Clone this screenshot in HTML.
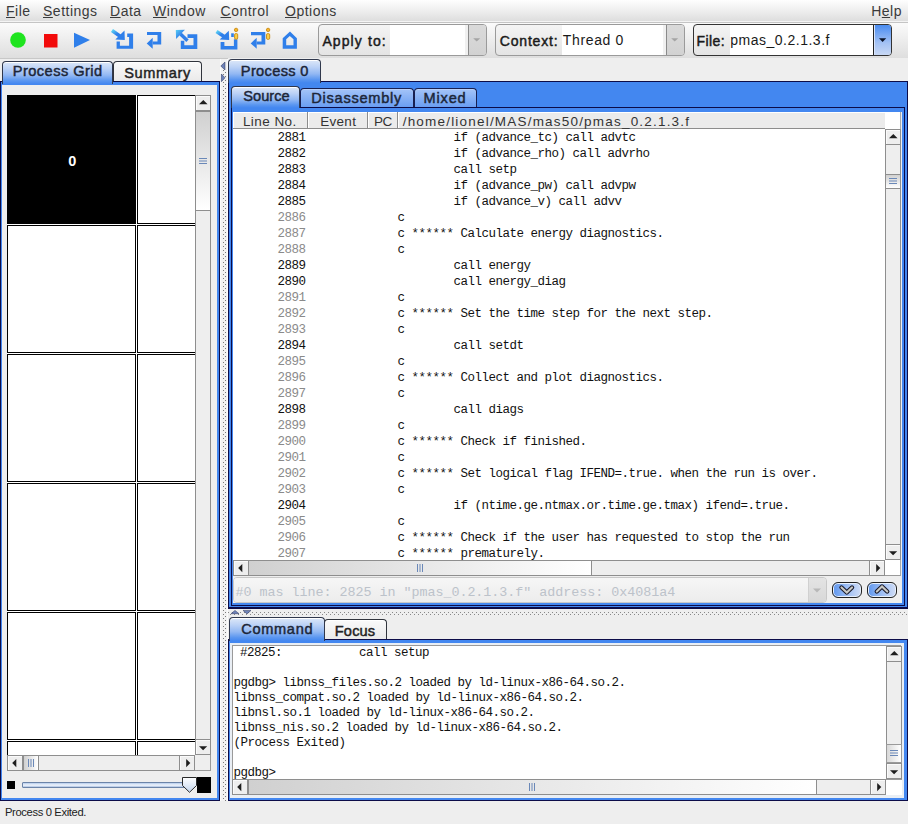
<!DOCTYPE html><html><head><meta charset="utf-8"><style>
html,body{margin:0;padding:0;}
body{width:908px;height:824px;position:relative;overflow:hidden;background:#eeeeee;font-family:"Liberation Sans",sans-serif;}
.a{position:absolute;box-sizing:border-box;}
.t{position:absolute;white-space:pre;}
u{text-decoration:underline;text-decoration-thickness:1px;text-underline-offset:0.5px;}
</style></head><body>
<div class="a" style="left:0px;top:0px;width:908px;height:22px;background:linear-gradient(#fefefe,#ececec 55%,#dcdcdc);box-shadow:inset 0 -1px 0 #f4f4f4;"></div><div class="a" style="left:0px;top:22px;width:908px;height:1px;background:#c4c4c4;"></div><div class="t" style="left:6px;top:3.13px;font-size:14px;line-height:16.1px;font-weight:normal;color:#3a3a3a;letter-spacing:0.5px;font-family:'Liberation Sans', sans-serif;"><u>F</u>ile</div><div class="t" style="left:43px;top:3.13px;font-size:14px;line-height:16.1px;font-weight:normal;color:#3a3a3a;letter-spacing:0.5px;font-family:'Liberation Sans', sans-serif;"><u>S</u>ettings</div><div class="t" style="left:110px;top:3.13px;font-size:14px;line-height:16.1px;font-weight:normal;color:#3a3a3a;letter-spacing:0.5px;font-family:'Liberation Sans', sans-serif;"><u>D</u>ata</div><div class="t" style="left:153px;top:3.13px;font-size:14px;line-height:16.1px;font-weight:normal;color:#3a3a3a;letter-spacing:0.5px;font-family:'Liberation Sans', sans-serif;"><u>W</u>indow</div><div class="t" style="left:220.5px;top:3.13px;font-size:14px;line-height:16.1px;font-weight:normal;color:#3a3a3a;letter-spacing:0.5px;font-family:'Liberation Sans', sans-serif;"><u>C</u>ontrol</div><div class="t" style="left:285px;top:3.13px;font-size:14px;line-height:16.1px;font-weight:normal;color:#3a3a3a;letter-spacing:0.5px;font-family:'Liberation Sans', sans-serif;"><u>O</u>ptions</div><div class="t" style="left:871.2px;top:3.13px;font-size:14px;line-height:16.1px;font-weight:normal;color:#3a3a3a;letter-spacing:0.5px;font-family:'Liberation Sans', sans-serif;">H<u>e</u>lp</div><div class="a" style="left:0px;top:23px;width:908px;height:35px;background:linear-gradient(#fbfbfb,#dedede);"></div><div class="a" style="left:0px;top:58px;width:908px;height:1px;background:#c8c8c8;"></div><svg class="a" style="left:10px;top:32px" width="16" height="16" viewBox="0 0 16 16"><circle cx="8" cy="8" r="7.8" fill="#1fe41f"/></svg><svg class="a" style="left:43px;top:33px" width="15" height="15" viewBox="0 0 15 15"><rect x="1" y="1" width="13.5" height="13.5" fill="#f20a0a"/></svg><svg class="a" style="left:72px;top:31px" width="20" height="18" viewBox="0 0 20 18"><path d="M2 1.8 L18 8.9 L2 16.8 Z" fill="#2f7fea"/></svg><svg class="a" style="left:108px;top:26px" width="30" height="26" viewBox="0 0 30 26"><defs><linearGradient id="g1" x1="0" y1="0" x2="1" y2="1"><stop offset="0" stop-color="#5ad0f4"/><stop offset="0.6" stop-color="#2f7fea"/></linearGradient></defs><path d="M4 4.6 L12.5 10.5" stroke="url(#g1)" stroke-width="3.6" stroke-linecap="butt"/><path d="M7.3 13.5 L16.5 4.6 L16.8 13.9 Z" fill="#2f7fea"/><path fill="#2f7fea" d="M19.2 7.6 H25.1 V22.8 H8.6 V15.5 H11.9 V19.8 H21.1 V10.9 H19.2 Z"/></svg><svg class="a" style="left:142px;top:26px" width="24" height="26" viewBox="0 0 24 26"><path fill="#2f7fea" d="M5 6 H19.2 V18.6 H10.7 V15.5 H15.5 V9.1 H5 Z"/><path d="M4.7 17.4 L10.7 11.7 L10.7 22.7 Z" fill="#2f7fea"/></svg><svg class="a" style="left:172px;top:26px" width="28" height="26" viewBox="0 0 28 26"><defs><linearGradient id="g3" x1="0" y1="0" x2="1" y2="1"><stop offset="0" stop-color="#5ad0f4"/><stop offset="0.6" stop-color="#2f7fea"/></linearGradient></defs><path d="M8.5 8 L15.5 14.8" stroke="#2f7fea" stroke-width="3.4"/><path d="M3.8 4.1 L12.9 3.8 L4.1 12.9 Z" fill="url(#g3)"/><path fill="#2f7fea" d="M15.5 8.2 H25.3 V23 H8.8 V14.8 H12.3 V19.3 H21.5 V12 H15.5 Z"/></svg><svg class="a" style="left:214px;top:26px" width="28" height="26" viewBox="0 0 28 26"><defs><linearGradient id="g4" x1="0" y1="0" x2="1" y2="1"><stop offset="0" stop-color="#5ad0f4"/><stop offset="0.6" stop-color="#2f7fea"/></linearGradient></defs><path d="M2.5 5.6 L10.5 10.8" stroke="url(#g4)" stroke-width="3.6"/><path d="M5.7 13.6 L14.8 4.7 L15.2 13.9 Z" fill="#2f7fea"/><rect x="17.2" y="7.3" width="2.6" height="3.7" fill="#2f7fea"/><path fill="#2f7fea" d="M19.9 13.3 H23.4 V23.4 H6.6 V16.1 H10.4 V19.9 H19.9 Z"/><circle cx="22.1" cy="3.9" r="1.7" fill="#f7b52a" stroke="#c98a10" stroke-width="0.9"/><rect x="20.6" y="7.6" width="3.1" height="5.6" rx="1.2" fill="#f9d04a" stroke="#c98a10" stroke-width="0.9"/></svg><svg class="a" style="left:246px;top:26px" width="28" height="26" viewBox="0 0 28 26"><path fill="#2f7fea" d="M5 6 H19.3 V18.6 H10.7 V15.5 H15.5 V9.2 H5 Z"/><path d="M4.7 17.4 L10.7 11.7 L10.7 22.7 Z" fill="#2f7fea"/><circle cx="22.1" cy="3.9" r="1.7" fill="#f7b52a" stroke="#c98a10" stroke-width="0.9"/><rect x="20.5" y="7.6" width="3.2" height="5.8" rx="1.3" fill="#f9d04a" stroke="#c98a10" stroke-width="0.9"/></svg><svg class="a" style="left:278px;top:26px" width="24" height="26" viewBox="0 0 24 26"><path fill="#2f7fea" fill-rule="evenodd" d="M4.7 22.7 V12.3 L12 5.4 L18.9 12.3 V22.7 Z M8.2 19.2 H15.5 V13.2 L11.8 10.1 L8.2 13.2 Z"/></svg><div class="a" style="left:318px;top:24px;width:169px;height:32px;border:1px solid #9a9a9a;border-radius:4px;background:linear-gradient(#f4f4f4,#e4e4e4);overflow:hidden;"></div><div class="a" style="left:390px;top:25px;width:78px;height:30px;background:#fff;border-right:3px solid #f0f0f0;"></div><div class="a" style="left:468px;top:25px;width:18px;height:30px;background:linear-gradient(#dadada,#d2d2d2);border-left:1px solid #8a8a8a;border-radius:0 3px 3px 0;"></div><svg class="a" style="left:472px;top:37px" width="10" height="6" viewBox="0 0 10 6"><path d="M1.2 1.2 H8.2 L4.7 4.4 Z" fill="#a4a4a4"/></svg><div class="t" style="left:322.4px;top:32.93px;font-size:14px;line-height:16.1px;font-weight:normal;color:#1a1a1a;letter-spacing:1.1px;font-family:'Liberation Sans', sans-serif;-webkit-text-stroke:0.45px #1a1a1a;">Apply to:</div><div class="a" style="left:495px;top:24px;width:190px;height:32px;border:1px solid #9a9a9a;border-radius:4px;background:linear-gradient(#f4f4f4,#e4e4e4);overflow:hidden;"></div><div class="a" style="left:562px;top:25px;width:104px;height:30px;background:#fff;border-right:3px solid #f0f0f0;"></div><div class="a" style="left:666px;top:25px;width:18px;height:30px;background:linear-gradient(#dadada,#d2d2d2);border-left:1px solid #8a8a8a;border-radius:0 3px 3px 0;"></div><svg class="a" style="left:670px;top:37px" width="10" height="6" viewBox="0 0 10 6"><path d="M1.2 1.2 H8.2 L4.7 4.4 Z" fill="#a4a4a4"/></svg><div class="t" style="left:499.8px;top:32.93px;font-size:14px;line-height:16.1px;font-weight:normal;color:#1a1a1a;letter-spacing:0.8px;font-family:'Liberation Sans', sans-serif;-webkit-text-stroke:0.45px #1a1a1a;">Context:</div><div class="t" style="left:562.8px;top:32.13px;font-size:14px;line-height:16.1px;font-weight:normal;color:#1a1a1a;letter-spacing:0.65px;font-family:'Liberation Sans', sans-serif;">Thread 0</div><div class="a" style="left:693px;top:24px;width:199px;height:32px;border:1px solid #333;border-radius:4px;background:linear-gradient(#f4f4f4,#e4e4e4);overflow:hidden;"></div><div class="a" style="left:730px;top:25px;width:143px;height:30px;background:#fff;"></div><div class="a" style="left:873px;top:25px;width:18px;height:30px;background:linear-gradient(#4a8cf0,#a4c2f4 60%,#c8d8f4);border-left:1px solid #222;box-shadow:inset 1px 0 0 #d8e4fa;border-radius:0 3px 3px 0;"></div><svg class="a" style="left:878px;top:37px" width="10" height="7" viewBox="0 0 10 7"><path d="M1 1.2 H8.2 L4.6 5 Z" fill="#0c1428"/></svg><div class="t" style="left:696.5px;top:32.93px;font-size:14px;line-height:16.1px;font-weight:normal;color:#1a1a1a;letter-spacing:0.4px;font-family:'Liberation Sans', sans-serif;-webkit-text-stroke:0.45px #1a1a1a;">File:</div><div class="t" style="left:730.3px;top:32.13px;font-size:14px;line-height:16.1px;font-weight:normal;color:#1a1a1a;letter-spacing:0.5px;font-family:'Liberation Sans', sans-serif;">pmas_0.2.1.3.f</div><div class="a" style="left:0px;top:81px;width:220px;height:720px;background:#0c0c48;"></div><div class="a" style="left:1px;top:82px;width:218px;height:718px;background:#4387f0;"></div><div class="a" style="left:2px;top:85px;width:215px;height:713px;background:#eeeeee;"></div><div class="a" style="left:113px;top:61px;width:89px;height:20px;border:1px solid #30343c;border-bottom:none;border-radius:4px 4px 0 0;box-shadow:inset 0 1px 0 #fff;background:linear-gradient(#fafafa,#eaeaea);"></div><div class="t" style="left:124.2px;top:64.59px;font-size:14.6px;line-height:16.79px;font-weight:normal;color:#222;letter-spacing:0.6px;font-family:'Liberation Sans', sans-serif;-webkit-text-stroke:0.45px #222;">Summary</div><div class="a" style="left:2px;top:61px;width:111px;height:23px;border:1px solid #30384c;border-bottom:none;border-radius:4px 4px 0 0;box-shadow:inset 0 1px 0 #fff;background:linear-gradient(#dde8f8 0%,#bcd2f6 30%,#92b8f3 60%,#5a96f0 85%,#4286f0 100%);"></div><div class="t" style="left:12.8px;top:62.79px;font-size:14.6px;line-height:16.79px;font-weight:normal;color:#1c2638;letter-spacing:0.45px;font-family:'Liberation Sans', sans-serif;-webkit-text-stroke:0.45px #1c2638;">Process Grid</div><div class="a" style="left:7px;top:95px;width:188px;height:660px;background:#ffffff;overflow:hidden;"></div><div class="a" style="left:7px;top:95px;width:129px;height:129px;background:#000;"></div><div class="a" style="left:137px;top:95px;width:60px;height:129px;border:1px solid #000;background:#fff;border-right:none;"></div><div class="a" style="left:7px;top:225px;width:129px;height:128px;border:1px solid #000;background:#fff;"></div><div class="a" style="left:137px;top:225px;width:60px;height:128px;border:1px solid #000;background:#fff;border-right:none;"></div><div class="a" style="left:7px;top:354px;width:129px;height:128px;border:1px solid #000;background:#fff;"></div><div class="a" style="left:137px;top:354px;width:60px;height:128px;border:1px solid #000;background:#fff;border-right:none;"></div><div class="a" style="left:7px;top:483px;width:129px;height:128px;border:1px solid #000;background:#fff;"></div><div class="a" style="left:137px;top:483px;width:60px;height:128px;border:1px solid #000;background:#fff;border-right:none;"></div><div class="a" style="left:7px;top:612px;width:129px;height:128px;border:1px solid #000;background:#fff;"></div><div class="a" style="left:137px;top:612px;width:60px;height:128px;border:1px solid #000;background:#fff;border-right:none;"></div><div class="a" style="left:7px;top:741px;width:129px;height:16px;border:1px solid #000;background:#fff;border-bottom:none;"></div><div class="a" style="left:137px;top:741px;width:60px;height:16px;border:1px solid #000;background:#fff;border-right:none;border-bottom:none;"></div><div class="t" style="left:68.2px;top:152.88px;font-size:14.5px;line-height:16.67px;font-weight:bold;color:#fff;letter-spacing:0px;font-family:'Liberation Sans', sans-serif;">0</div><div class="a" style="left:195px;top:95px;width:16px;height:660px;background:#eeeeee;border-left:1px solid #8e8e8e;border-right:1px solid #8e8e8e;"></div><div class="a" style="left:195px;top:95px;width:16px;height:16px;background:#eeeeee;border:1px solid #8e8e8e;box-shadow:inset 1px 1px 0 #fafafa;"></div><svg class="a" style="left:198.5px;top:100px" width="9" height="5" viewBox="0 0 9 5"><path d="M0 4.3 L4.3 0 L8.6 4.3 Z" fill="#1e1e1e"/></svg><div class="a" style="left:195px;top:739px;width:16px;height:16px;background:#eeeeee;border:1px solid #8e8e8e;box-shadow:inset 1px 1px 0 #fafafa;"></div><svg class="a" style="left:199px;top:745.5px" width="9" height="5" viewBox="0 0 9 5"><path d="M0 0.2 L8.2 0.2 L4.1 4.3 Z" fill="#1e1e1e"/></svg><div class="a" style="left:195px;top:111px;width:16px;height:100px;background:linear-gradient(#d0d0d0,#ffffff);border:1px solid #8e8e8e;"></div><svg class="a" style="left:199px;top:157px" width="8" height="8" viewBox="0 0 8 8"><path d="M0 1.5 H8 M0 4 H8 M0 6.5 H8" stroke="#6a88b8" stroke-width="1"/></svg><div class="a" style="left:7px;top:755px;width:188px;height:16px;background:#eeeeee;border-top:1px solid #8e8e8e;border-bottom:1px solid #8e8e8e;"></div><div class="a" style="left:7px;top:755px;width:16px;height:16px;background:#eeeeee;border:1px solid #8e8e8e;box-shadow:inset 1px 1px 0 #fafafa;"></div><svg class="a" style="left:11.5px;top:759px" width="5" height="9" viewBox="0 0 5 9"><path d="M4.3 0 L0.2 4.1 L4.3 8.2 Z" fill="#1e1e1e"/></svg><div class="a" style="left:179px;top:755px;width:16px;height:16px;background:#eeeeee;border:1px solid #8e8e8e;box-shadow:inset 1px 1px 0 #fafafa;"></div><svg class="a" style="left:186px;top:759px" width="5" height="9" viewBox="0 0 5 9"><path d="M0.2 0 L4.3 4.1 L0.2 8.2 Z" fill="#1e1e1e"/></svg><div class="a" style="left:23px;top:755px;width:16px;height:16px;background:linear-gradient(90deg,#d0d0d0,#ffffff);border:1px solid #8e8e8e;"></div><svg class="a" style="left:27px;top:759px" width="8" height="8" viewBox="0 0 8 8"><path d="M1.5 0 V8 M4 0 V8 M6.5 0 V8" stroke="#6a88b8" stroke-width="1"/></svg><div class="a" style="left:7px;top:781px;width:8px;height:8px;background:#000;"></div><div class="a" style="left:22px;top:782px;width:172px;height:6px;border:1px solid #6c84a8;border-radius:1px;background:linear-gradient(#b4cbec,#f2f6fc 55%,#a9c0e2);"></div><svg class="a" style="left:182px;top:776px" width="16" height="17" viewBox="0 0 16 17"><defs><linearGradient id="sth" x1="0" y1="0" x2="0" y2="1"><stop offset="0" stop-color="#ffffff"/><stop offset="1" stop-color="#c4d6ee"/></linearGradient></defs><path d="M0.5 1.5 H14.5 V9.5 L7.5 16.3 L0.5 9.5 Z" fill="url(#sth)" stroke="#2a2a2a" stroke-width="1"/></svg><div class="a" style="left:195px;top:755px;width:16px;height:16px;background:#eeeeee;border-right:1px solid #9a9a9a;border-bottom:1px solid #9a9a9a;"></div><div class="a" style="left:197px;top:777px;width:14px;height:16px;background:#000;"></div><div class="a" style="left:220px;top:59px;width:8px;height:742px;background:#f2f2f2;border-left:1px solid #fbfbfb;border-right:1px solid #fbfbfb;"></div><svg class="a" style="left:223px;top:70px" width="3" height="731" viewBox="0 0 3 731"><rect x="0" y="0" width="1" height="1" fill="#7a7a7a"/><rect x="0" y="4" width="1" height="1" fill="#7a7a7a"/><rect x="0" y="8" width="1" height="1" fill="#7a7a7a"/><rect x="0" y="12" width="1" height="1" fill="#7a7a7a"/><rect x="0" y="16" width="1" height="1" fill="#7a7a7a"/><rect x="0" y="20" width="1" height="1" fill="#7a7a7a"/><rect x="0" y="24" width="1" height="1" fill="#7a7a7a"/><rect x="0" y="28" width="1" height="1" fill="#7a7a7a"/><rect x="0" y="32" width="1" height="1" fill="#7a7a7a"/><rect x="0" y="36" width="1" height="1" fill="#7a7a7a"/><rect x="0" y="40" width="1" height="1" fill="#7a7a7a"/><rect x="0" y="44" width="1" height="1" fill="#7a7a7a"/><rect x="0" y="48" width="1" height="1" fill="#7a7a7a"/><rect x="0" y="52" width="1" height="1" fill="#7a7a7a"/><rect x="0" y="56" width="1" height="1" fill="#7a7a7a"/><rect x="0" y="60" width="1" height="1" fill="#7a7a7a"/><rect x="0" y="64" width="1" height="1" fill="#7a7a7a"/><rect x="0" y="68" width="1" height="1" fill="#7a7a7a"/><rect x="0" y="72" width="1" height="1" fill="#7a7a7a"/><rect x="0" y="76" width="1" height="1" fill="#7a7a7a"/><rect x="0" y="80" width="1" height="1" fill="#7a7a7a"/><rect x="0" y="84" width="1" height="1" fill="#7a7a7a"/><rect x="0" y="88" width="1" height="1" fill="#7a7a7a"/><rect x="0" y="92" width="1" height="1" fill="#7a7a7a"/><rect x="0" y="96" width="1" height="1" fill="#7a7a7a"/><rect x="0" y="100" width="1" height="1" fill="#7a7a7a"/><rect x="0" y="104" width="1" height="1" fill="#7a7a7a"/><rect x="0" y="108" width="1" height="1" fill="#7a7a7a"/><rect x="0" y="112" width="1" height="1" fill="#7a7a7a"/><rect x="0" y="116" width="1" height="1" fill="#7a7a7a"/><rect x="0" y="120" width="1" height="1" fill="#7a7a7a"/><rect x="0" y="124" width="1" height="1" fill="#7a7a7a"/><rect x="0" y="128" width="1" height="1" fill="#7a7a7a"/><rect x="0" y="132" width="1" height="1" fill="#7a7a7a"/><rect x="0" y="136" width="1" height="1" fill="#7a7a7a"/><rect x="0" y="140" width="1" height="1" fill="#7a7a7a"/><rect x="0" y="144" width="1" height="1" fill="#7a7a7a"/><rect x="0" y="148" width="1" height="1" fill="#7a7a7a"/><rect x="0" y="152" width="1" height="1" fill="#7a7a7a"/><rect x="0" y="156" width="1" height="1" fill="#7a7a7a"/><rect x="0" y="160" width="1" height="1" fill="#7a7a7a"/><rect x="0" y="164" width="1" height="1" fill="#7a7a7a"/><rect x="0" y="168" width="1" height="1" fill="#7a7a7a"/><rect x="0" y="172" width="1" height="1" fill="#7a7a7a"/><rect x="0" y="176" width="1" height="1" fill="#7a7a7a"/><rect x="0" y="180" width="1" height="1" fill="#7a7a7a"/><rect x="0" y="184" width="1" height="1" fill="#7a7a7a"/><rect x="0" y="188" width="1" height="1" fill="#7a7a7a"/><rect x="0" y="192" width="1" height="1" fill="#7a7a7a"/><rect x="0" y="196" width="1" height="1" fill="#7a7a7a"/><rect x="0" y="200" width="1" height="1" fill="#7a7a7a"/><rect x="0" y="204" width="1" height="1" fill="#7a7a7a"/><rect x="0" y="208" width="1" height="1" fill="#7a7a7a"/><rect x="0" y="212" width="1" height="1" fill="#7a7a7a"/><rect x="0" y="216" width="1" height="1" fill="#7a7a7a"/><rect x="0" y="220" width="1" height="1" fill="#7a7a7a"/><rect x="0" y="224" width="1" height="1" fill="#7a7a7a"/><rect x="0" y="228" width="1" height="1" fill="#7a7a7a"/><rect x="0" y="232" width="1" height="1" fill="#7a7a7a"/><rect x="0" y="236" width="1" height="1" fill="#7a7a7a"/><rect x="0" y="240" width="1" height="1" fill="#7a7a7a"/><rect x="0" y="244" width="1" height="1" fill="#7a7a7a"/><rect x="0" y="248" width="1" height="1" fill="#7a7a7a"/><rect x="0" y="252" width="1" height="1" fill="#7a7a7a"/><rect x="0" y="256" width="1" height="1" fill="#7a7a7a"/><rect x="0" y="260" width="1" height="1" fill="#7a7a7a"/><rect x="0" y="264" width="1" height="1" fill="#7a7a7a"/><rect x="0" y="268" width="1" height="1" fill="#7a7a7a"/><rect x="0" y="272" width="1" height="1" fill="#7a7a7a"/><rect x="0" y="276" width="1" height="1" fill="#7a7a7a"/><rect x="0" y="280" width="1" height="1" fill="#7a7a7a"/><rect x="0" y="284" width="1" height="1" fill="#7a7a7a"/><rect x="0" y="288" width="1" height="1" fill="#7a7a7a"/><rect x="0" y="292" width="1" height="1" fill="#7a7a7a"/><rect x="0" y="296" width="1" height="1" fill="#7a7a7a"/><rect x="0" y="300" width="1" height="1" fill="#7a7a7a"/><rect x="0" y="304" width="1" height="1" fill="#7a7a7a"/><rect x="0" y="308" width="1" height="1" fill="#7a7a7a"/><rect x="0" y="312" width="1" height="1" fill="#7a7a7a"/><rect x="0" y="316" width="1" height="1" fill="#7a7a7a"/><rect x="0" y="320" width="1" height="1" fill="#7a7a7a"/><rect x="0" y="324" width="1" height="1" fill="#7a7a7a"/><rect x="0" y="328" width="1" height="1" fill="#7a7a7a"/><rect x="0" y="332" width="1" height="1" fill="#7a7a7a"/><rect x="0" y="336" width="1" height="1" fill="#7a7a7a"/><rect x="0" y="340" width="1" height="1" fill="#7a7a7a"/><rect x="0" y="344" width="1" height="1" fill="#7a7a7a"/><rect x="0" y="348" width="1" height="1" fill="#7a7a7a"/><rect x="0" y="352" width="1" height="1" fill="#7a7a7a"/><rect x="0" y="356" width="1" height="1" fill="#7a7a7a"/><rect x="0" y="360" width="1" height="1" fill="#7a7a7a"/><rect x="0" y="364" width="1" height="1" fill="#7a7a7a"/><rect x="0" y="368" width="1" height="1" fill="#7a7a7a"/><rect x="0" y="372" width="1" height="1" fill="#7a7a7a"/><rect x="0" y="376" width="1" height="1" fill="#7a7a7a"/><rect x="0" y="380" width="1" height="1" fill="#7a7a7a"/><rect x="0" y="384" width="1" height="1" fill="#7a7a7a"/><rect x="0" y="388" width="1" height="1" fill="#7a7a7a"/><rect x="0" y="392" width="1" height="1" fill="#7a7a7a"/><rect x="0" y="396" width="1" height="1" fill="#7a7a7a"/><rect x="0" y="400" width="1" height="1" fill="#7a7a7a"/><rect x="0" y="404" width="1" height="1" fill="#7a7a7a"/><rect x="0" y="408" width="1" height="1" fill="#7a7a7a"/><rect x="0" y="412" width="1" height="1" fill="#7a7a7a"/><rect x="0" y="416" width="1" height="1" fill="#7a7a7a"/><rect x="0" y="420" width="1" height="1" fill="#7a7a7a"/><rect x="0" y="424" width="1" height="1" fill="#7a7a7a"/><rect x="0" y="428" width="1" height="1" fill="#7a7a7a"/><rect x="0" y="432" width="1" height="1" fill="#7a7a7a"/><rect x="0" y="436" width="1" height="1" fill="#7a7a7a"/><rect x="0" y="440" width="1" height="1" fill="#7a7a7a"/><rect x="0" y="444" width="1" height="1" fill="#7a7a7a"/><rect x="0" y="448" width="1" height="1" fill="#7a7a7a"/><rect x="0" y="452" width="1" height="1" fill="#7a7a7a"/><rect x="0" y="456" width="1" height="1" fill="#7a7a7a"/><rect x="0" y="460" width="1" height="1" fill="#7a7a7a"/><rect x="0" y="464" width="1" height="1" fill="#7a7a7a"/><rect x="0" y="468" width="1" height="1" fill="#7a7a7a"/><rect x="0" y="472" width="1" height="1" fill="#7a7a7a"/><rect x="0" y="476" width="1" height="1" fill="#7a7a7a"/><rect x="0" y="480" width="1" height="1" fill="#7a7a7a"/><rect x="0" y="484" width="1" height="1" fill="#7a7a7a"/><rect x="0" y="488" width="1" height="1" fill="#7a7a7a"/><rect x="0" y="492" width="1" height="1" fill="#7a7a7a"/><rect x="0" y="496" width="1" height="1" fill="#7a7a7a"/><rect x="0" y="500" width="1" height="1" fill="#7a7a7a"/><rect x="0" y="504" width="1" height="1" fill="#7a7a7a"/><rect x="0" y="508" width="1" height="1" fill="#7a7a7a"/><rect x="0" y="512" width="1" height="1" fill="#7a7a7a"/><rect x="0" y="516" width="1" height="1" fill="#7a7a7a"/><rect x="0" y="520" width="1" height="1" fill="#7a7a7a"/><rect x="0" y="524" width="1" height="1" fill="#7a7a7a"/><rect x="0" y="528" width="1" height="1" fill="#7a7a7a"/><rect x="0" y="532" width="1" height="1" fill="#7a7a7a"/><rect x="0" y="536" width="1" height="1" fill="#7a7a7a"/><rect x="0" y="540" width="1" height="1" fill="#7a7a7a"/><rect x="0" y="544" width="1" height="1" fill="#7a7a7a"/><rect x="0" y="548" width="1" height="1" fill="#7a7a7a"/><rect x="0" y="552" width="1" height="1" fill="#7a7a7a"/><rect x="0" y="556" width="1" height="1" fill="#7a7a7a"/><rect x="0" y="560" width="1" height="1" fill="#7a7a7a"/><rect x="0" y="564" width="1" height="1" fill="#7a7a7a"/><rect x="0" y="568" width="1" height="1" fill="#7a7a7a"/><rect x="0" y="572" width="1" height="1" fill="#7a7a7a"/><rect x="0" y="576" width="1" height="1" fill="#7a7a7a"/><rect x="0" y="580" width="1" height="1" fill="#7a7a7a"/><rect x="0" y="584" width="1" height="1" fill="#7a7a7a"/><rect x="0" y="588" width="1" height="1" fill="#7a7a7a"/><rect x="0" y="592" width="1" height="1" fill="#7a7a7a"/><rect x="0" y="596" width="1" height="1" fill="#7a7a7a"/><rect x="0" y="600" width="1" height="1" fill="#7a7a7a"/><rect x="0" y="604" width="1" height="1" fill="#7a7a7a"/><rect x="0" y="608" width="1" height="1" fill="#7a7a7a"/><rect x="0" y="612" width="1" height="1" fill="#7a7a7a"/><rect x="0" y="616" width="1" height="1" fill="#7a7a7a"/><rect x="0" y="620" width="1" height="1" fill="#7a7a7a"/><rect x="0" y="624" width="1" height="1" fill="#7a7a7a"/><rect x="0" y="628" width="1" height="1" fill="#7a7a7a"/><rect x="0" y="632" width="1" height="1" fill="#7a7a7a"/><rect x="0" y="636" width="1" height="1" fill="#7a7a7a"/><rect x="0" y="640" width="1" height="1" fill="#7a7a7a"/><rect x="0" y="644" width="1" height="1" fill="#7a7a7a"/><rect x="0" y="648" width="1" height="1" fill="#7a7a7a"/><rect x="0" y="652" width="1" height="1" fill="#7a7a7a"/><rect x="0" y="656" width="1" height="1" fill="#7a7a7a"/><rect x="0" y="660" width="1" height="1" fill="#7a7a7a"/><rect x="0" y="664" width="1" height="1" fill="#7a7a7a"/><rect x="0" y="668" width="1" height="1" fill="#7a7a7a"/><rect x="0" y="672" width="1" height="1" fill="#7a7a7a"/><rect x="0" y="676" width="1" height="1" fill="#7a7a7a"/><rect x="0" y="680" width="1" height="1" fill="#7a7a7a"/><rect x="0" y="684" width="1" height="1" fill="#7a7a7a"/><rect x="0" y="688" width="1" height="1" fill="#7a7a7a"/><rect x="0" y="692" width="1" height="1" fill="#7a7a7a"/><rect x="0" y="696" width="1" height="1" fill="#7a7a7a"/><rect x="0" y="700" width="1" height="1" fill="#7a7a7a"/><rect x="0" y="704" width="1" height="1" fill="#7a7a7a"/><rect x="0" y="708" width="1" height="1" fill="#7a7a7a"/><rect x="0" y="712" width="1" height="1" fill="#7a7a7a"/><rect x="0" y="716" width="1" height="1" fill="#7a7a7a"/><rect x="0" y="720" width="1" height="1" fill="#7a7a7a"/><rect x="0" y="724" width="1" height="1" fill="#7a7a7a"/><rect x="0" y="728" width="1" height="1" fill="#7a7a7a"/><rect x="0" y="732" width="1" height="1" fill="#7a7a7a"/><rect x="2" y="2" width="1" height="1" fill="#7a7a7a"/><rect x="2" y="6" width="1" height="1" fill="#7a7a7a"/><rect x="2" y="10" width="1" height="1" fill="#7a7a7a"/><rect x="2" y="14" width="1" height="1" fill="#7a7a7a"/><rect x="2" y="18" width="1" height="1" fill="#7a7a7a"/><rect x="2" y="22" width="1" height="1" fill="#7a7a7a"/><rect x="2" y="26" width="1" height="1" fill="#7a7a7a"/><rect x="2" y="30" width="1" height="1" fill="#7a7a7a"/><rect x="2" y="34" width="1" height="1" fill="#7a7a7a"/><rect x="2" y="38" width="1" height="1" fill="#7a7a7a"/><rect x="2" y="42" width="1" height="1" fill="#7a7a7a"/><rect x="2" y="46" width="1" height="1" fill="#7a7a7a"/><rect x="2" y="50" width="1" height="1" fill="#7a7a7a"/><rect x="2" y="54" width="1" height="1" fill="#7a7a7a"/><rect x="2" y="58" width="1" height="1" fill="#7a7a7a"/><rect x="2" y="62" width="1" height="1" fill="#7a7a7a"/><rect x="2" y="66" width="1" height="1" fill="#7a7a7a"/><rect x="2" y="70" width="1" height="1" fill="#7a7a7a"/><rect x="2" y="74" width="1" height="1" fill="#7a7a7a"/><rect x="2" y="78" width="1" height="1" fill="#7a7a7a"/><rect x="2" y="82" width="1" height="1" fill="#7a7a7a"/><rect x="2" y="86" width="1" height="1" fill="#7a7a7a"/><rect x="2" y="90" width="1" height="1" fill="#7a7a7a"/><rect x="2" y="94" width="1" height="1" fill="#7a7a7a"/><rect x="2" y="98" width="1" height="1" fill="#7a7a7a"/><rect x="2" y="102" width="1" height="1" fill="#7a7a7a"/><rect x="2" y="106" width="1" height="1" fill="#7a7a7a"/><rect x="2" y="110" width="1" height="1" fill="#7a7a7a"/><rect x="2" y="114" width="1" height="1" fill="#7a7a7a"/><rect x="2" y="118" width="1" height="1" fill="#7a7a7a"/><rect x="2" y="122" width="1" height="1" fill="#7a7a7a"/><rect x="2" y="126" width="1" height="1" fill="#7a7a7a"/><rect x="2" y="130" width="1" height="1" fill="#7a7a7a"/><rect x="2" y="134" width="1" height="1" fill="#7a7a7a"/><rect x="2" y="138" width="1" height="1" fill="#7a7a7a"/><rect x="2" y="142" width="1" height="1" fill="#7a7a7a"/><rect x="2" y="146" width="1" height="1" fill="#7a7a7a"/><rect x="2" y="150" width="1" height="1" fill="#7a7a7a"/><rect x="2" y="154" width="1" height="1" fill="#7a7a7a"/><rect x="2" y="158" width="1" height="1" fill="#7a7a7a"/><rect x="2" y="162" width="1" height="1" fill="#7a7a7a"/><rect x="2" y="166" width="1" height="1" fill="#7a7a7a"/><rect x="2" y="170" width="1" height="1" fill="#7a7a7a"/><rect x="2" y="174" width="1" height="1" fill="#7a7a7a"/><rect x="2" y="178" width="1" height="1" fill="#7a7a7a"/><rect x="2" y="182" width="1" height="1" fill="#7a7a7a"/><rect x="2" y="186" width="1" height="1" fill="#7a7a7a"/><rect x="2" y="190" width="1" height="1" fill="#7a7a7a"/><rect x="2" y="194" width="1" height="1" fill="#7a7a7a"/><rect x="2" y="198" width="1" height="1" fill="#7a7a7a"/><rect x="2" y="202" width="1" height="1" fill="#7a7a7a"/><rect x="2" y="206" width="1" height="1" fill="#7a7a7a"/><rect x="2" y="210" width="1" height="1" fill="#7a7a7a"/><rect x="2" y="214" width="1" height="1" fill="#7a7a7a"/><rect x="2" y="218" width="1" height="1" fill="#7a7a7a"/><rect x="2" y="222" width="1" height="1" fill="#7a7a7a"/><rect x="2" y="226" width="1" height="1" fill="#7a7a7a"/><rect x="2" y="230" width="1" height="1" fill="#7a7a7a"/><rect x="2" y="234" width="1" height="1" fill="#7a7a7a"/><rect x="2" y="238" width="1" height="1" fill="#7a7a7a"/><rect x="2" y="242" width="1" height="1" fill="#7a7a7a"/><rect x="2" y="246" width="1" height="1" fill="#7a7a7a"/><rect x="2" y="250" width="1" height="1" fill="#7a7a7a"/><rect x="2" y="254" width="1" height="1" fill="#7a7a7a"/><rect x="2" y="258" width="1" height="1" fill="#7a7a7a"/><rect x="2" y="262" width="1" height="1" fill="#7a7a7a"/><rect x="2" y="266" width="1" height="1" fill="#7a7a7a"/><rect x="2" y="270" width="1" height="1" fill="#7a7a7a"/><rect x="2" y="274" width="1" height="1" fill="#7a7a7a"/><rect x="2" y="278" width="1" height="1" fill="#7a7a7a"/><rect x="2" y="282" width="1" height="1" fill="#7a7a7a"/><rect x="2" y="286" width="1" height="1" fill="#7a7a7a"/><rect x="2" y="290" width="1" height="1" fill="#7a7a7a"/><rect x="2" y="294" width="1" height="1" fill="#7a7a7a"/><rect x="2" y="298" width="1" height="1" fill="#7a7a7a"/><rect x="2" y="302" width="1" height="1" fill="#7a7a7a"/><rect x="2" y="306" width="1" height="1" fill="#7a7a7a"/><rect x="2" y="310" width="1" height="1" fill="#7a7a7a"/><rect x="2" y="314" width="1" height="1" fill="#7a7a7a"/><rect x="2" y="318" width="1" height="1" fill="#7a7a7a"/><rect x="2" y="322" width="1" height="1" fill="#7a7a7a"/><rect x="2" y="326" width="1" height="1" fill="#7a7a7a"/><rect x="2" y="330" width="1" height="1" fill="#7a7a7a"/><rect x="2" y="334" width="1" height="1" fill="#7a7a7a"/><rect x="2" y="338" width="1" height="1" fill="#7a7a7a"/><rect x="2" y="342" width="1" height="1" fill="#7a7a7a"/><rect x="2" y="346" width="1" height="1" fill="#7a7a7a"/><rect x="2" y="350" width="1" height="1" fill="#7a7a7a"/><rect x="2" y="354" width="1" height="1" fill="#7a7a7a"/><rect x="2" y="358" width="1" height="1" fill="#7a7a7a"/><rect x="2" y="362" width="1" height="1" fill="#7a7a7a"/><rect x="2" y="366" width="1" height="1" fill="#7a7a7a"/><rect x="2" y="370" width="1" height="1" fill="#7a7a7a"/><rect x="2" y="374" width="1" height="1" fill="#7a7a7a"/><rect x="2" y="378" width="1" height="1" fill="#7a7a7a"/><rect x="2" y="382" width="1" height="1" fill="#7a7a7a"/><rect x="2" y="386" width="1" height="1" fill="#7a7a7a"/><rect x="2" y="390" width="1" height="1" fill="#7a7a7a"/><rect x="2" y="394" width="1" height="1" fill="#7a7a7a"/><rect x="2" y="398" width="1" height="1" fill="#7a7a7a"/><rect x="2" y="402" width="1" height="1" fill="#7a7a7a"/><rect x="2" y="406" width="1" height="1" fill="#7a7a7a"/><rect x="2" y="410" width="1" height="1" fill="#7a7a7a"/><rect x="2" y="414" width="1" height="1" fill="#7a7a7a"/><rect x="2" y="418" width="1" height="1" fill="#7a7a7a"/><rect x="2" y="422" width="1" height="1" fill="#7a7a7a"/><rect x="2" y="426" width="1" height="1" fill="#7a7a7a"/><rect x="2" y="430" width="1" height="1" fill="#7a7a7a"/><rect x="2" y="434" width="1" height="1" fill="#7a7a7a"/><rect x="2" y="438" width="1" height="1" fill="#7a7a7a"/><rect x="2" y="442" width="1" height="1" fill="#7a7a7a"/><rect x="2" y="446" width="1" height="1" fill="#7a7a7a"/><rect x="2" y="450" width="1" height="1" fill="#7a7a7a"/><rect x="2" y="454" width="1" height="1" fill="#7a7a7a"/><rect x="2" y="458" width="1" height="1" fill="#7a7a7a"/><rect x="2" y="462" width="1" height="1" fill="#7a7a7a"/><rect x="2" y="466" width="1" height="1" fill="#7a7a7a"/><rect x="2" y="470" width="1" height="1" fill="#7a7a7a"/><rect x="2" y="474" width="1" height="1" fill="#7a7a7a"/><rect x="2" y="478" width="1" height="1" fill="#7a7a7a"/><rect x="2" y="482" width="1" height="1" fill="#7a7a7a"/><rect x="2" y="486" width="1" height="1" fill="#7a7a7a"/><rect x="2" y="490" width="1" height="1" fill="#7a7a7a"/><rect x="2" y="494" width="1" height="1" fill="#7a7a7a"/><rect x="2" y="498" width="1" height="1" fill="#7a7a7a"/><rect x="2" y="502" width="1" height="1" fill="#7a7a7a"/><rect x="2" y="506" width="1" height="1" fill="#7a7a7a"/><rect x="2" y="510" width="1" height="1" fill="#7a7a7a"/><rect x="2" y="514" width="1" height="1" fill="#7a7a7a"/><rect x="2" y="518" width="1" height="1" fill="#7a7a7a"/><rect x="2" y="522" width="1" height="1" fill="#7a7a7a"/><rect x="2" y="526" width="1" height="1" fill="#7a7a7a"/><rect x="2" y="530" width="1" height="1" fill="#7a7a7a"/><rect x="2" y="534" width="1" height="1" fill="#7a7a7a"/><rect x="2" y="538" width="1" height="1" fill="#7a7a7a"/><rect x="2" y="542" width="1" height="1" fill="#7a7a7a"/><rect x="2" y="546" width="1" height="1" fill="#7a7a7a"/><rect x="2" y="550" width="1" height="1" fill="#7a7a7a"/><rect x="2" y="554" width="1" height="1" fill="#7a7a7a"/><rect x="2" y="558" width="1" height="1" fill="#7a7a7a"/><rect x="2" y="562" width="1" height="1" fill="#7a7a7a"/><rect x="2" y="566" width="1" height="1" fill="#7a7a7a"/><rect x="2" y="570" width="1" height="1" fill="#7a7a7a"/><rect x="2" y="574" width="1" height="1" fill="#7a7a7a"/><rect x="2" y="578" width="1" height="1" fill="#7a7a7a"/><rect x="2" y="582" width="1" height="1" fill="#7a7a7a"/><rect x="2" y="586" width="1" height="1" fill="#7a7a7a"/><rect x="2" y="590" width="1" height="1" fill="#7a7a7a"/><rect x="2" y="594" width="1" height="1" fill="#7a7a7a"/><rect x="2" y="598" width="1" height="1" fill="#7a7a7a"/><rect x="2" y="602" width="1" height="1" fill="#7a7a7a"/><rect x="2" y="606" width="1" height="1" fill="#7a7a7a"/><rect x="2" y="610" width="1" height="1" fill="#7a7a7a"/><rect x="2" y="614" width="1" height="1" fill="#7a7a7a"/><rect x="2" y="618" width="1" height="1" fill="#7a7a7a"/><rect x="2" y="622" width="1" height="1" fill="#7a7a7a"/><rect x="2" y="626" width="1" height="1" fill="#7a7a7a"/><rect x="2" y="630" width="1" height="1" fill="#7a7a7a"/><rect x="2" y="634" width="1" height="1" fill="#7a7a7a"/><rect x="2" y="638" width="1" height="1" fill="#7a7a7a"/><rect x="2" y="642" width="1" height="1" fill="#7a7a7a"/><rect x="2" y="646" width="1" height="1" fill="#7a7a7a"/><rect x="2" y="650" width="1" height="1" fill="#7a7a7a"/><rect x="2" y="654" width="1" height="1" fill="#7a7a7a"/><rect x="2" y="658" width="1" height="1" fill="#7a7a7a"/><rect x="2" y="662" width="1" height="1" fill="#7a7a7a"/><rect x="2" y="666" width="1" height="1" fill="#7a7a7a"/><rect x="2" y="670" width="1" height="1" fill="#7a7a7a"/><rect x="2" y="674" width="1" height="1" fill="#7a7a7a"/><rect x="2" y="678" width="1" height="1" fill="#7a7a7a"/><rect x="2" y="682" width="1" height="1" fill="#7a7a7a"/><rect x="2" y="686" width="1" height="1" fill="#7a7a7a"/><rect x="2" y="690" width="1" height="1" fill="#7a7a7a"/><rect x="2" y="694" width="1" height="1" fill="#7a7a7a"/><rect x="2" y="698" width="1" height="1" fill="#7a7a7a"/><rect x="2" y="702" width="1" height="1" fill="#7a7a7a"/><rect x="2" y="706" width="1" height="1" fill="#7a7a7a"/><rect x="2" y="710" width="1" height="1" fill="#7a7a7a"/><rect x="2" y="714" width="1" height="1" fill="#7a7a7a"/><rect x="2" y="718" width="1" height="1" fill="#7a7a7a"/><rect x="2" y="722" width="1" height="1" fill="#7a7a7a"/><rect x="2" y="726" width="1" height="1" fill="#7a7a7a"/><rect x="2" y="730" width="1" height="1" fill="#7a7a7a"/><rect x="2" y="734" width="1" height="1" fill="#7a7a7a"/></svg><svg class="a" style="left:220px;top:61px" width="6" height="22" viewBox="0 0 6 22"><path d="M0.8 5 L5 1 L5 9 Z" fill="#6d82b8" stroke="#283058" stroke-width="0.5"/><path d="M1.4 13 L5 16.8 L1.4 20.7 Z" fill="#6d82b8" stroke="#283058" stroke-width="0.5"/></svg><div class="a" style="left:228px;top:81px;width:680px;height:528px;background:#0c0c48;"></div><div class="a" style="left:229px;top:82px;width:678px;height:525px;background:#4387f0;"></div><div class="a" style="left:228px;top:58px;width:680px;height:23px;background:#eeeeee;"></div><div class="a" style="left:228px;top:59px;width:93px;height:24px;border:1px solid #30384c;border-bottom:none;border-radius:4px 4px 0 0;box-shadow:inset 0 1px 0 #fff;background:linear-gradient(#dde8f8 0%,#bcd2f6 30%,#92b8f3 60%,#5a96f0 85%,#4286f0 100%);"></div><div class="t" style="left:240.8px;top:62.79px;font-size:14.6px;line-height:16.79px;font-weight:normal;color:#1c2638;letter-spacing:0.35px;font-family:'Liberation Sans', sans-serif;-webkit-text-stroke:0.45px #1c2638;">Process 0</div><div class="a" style="left:231px;top:107px;width:674px;height:499px;background:#0c0c48;"></div><div class="a" style="left:232px;top:108px;width:672px;height:497px;background:#4387f0;"></div><div class="a" style="left:233px;top:112px;width:669px;height:491px;background:#eeeeee;"></div><div class="a" style="left:300px;top:88px;width:114px;height:19px;border:1px solid #182050;border-bottom:none;border-radius:4px 4px 0 0;box-shadow:inset 0 1px 0 #b8d0fa;background:linear-gradient(#a4c4f8,#6a9ef2);"></div><div class="t" style="left:311.2px;top:90.39px;font-size:14.6px;line-height:16.79px;font-weight:normal;color:#1c2638;letter-spacing:0.75px;font-family:'Liberation Sans', sans-serif;-webkit-text-stroke:0.45px #1c2638;">Disassembly</div><div class="a" style="left:414px;top:88px;width:63px;height:19px;border:1px solid #182050;border-bottom:none;border-radius:4px 4px 0 0;box-shadow:inset 0 1px 0 #b8d0fa;background:linear-gradient(#a4c4f8,#6a9ef2);"></div><div class="t" style="left:423.4px;top:90.39px;font-size:14.6px;line-height:16.79px;font-weight:normal;color:#1c2638;letter-spacing:0.85px;font-family:'Liberation Sans', sans-serif;-webkit-text-stroke:0.45px #1c2638;">Mixed</div><div class="a" style="left:231px;top:86px;width:69px;height:22px;border:1px solid #30384c;border-bottom:none;border-radius:4px 4px 0 0;box-shadow:inset 0 1px 0 #fff;background:linear-gradient(#dde8f8 0%,#bcd2f6 30%,#92b8f3 60%,#5a96f0 85%,#4286f0 100%);"></div><div class="t" style="left:243.2px;top:88.39px;font-size:14.6px;line-height:16.79px;font-weight:normal;color:#1c2638;letter-spacing:0.05px;font-family:'Liberation Sans', sans-serif;-webkit-text-stroke:0.45px #1c2638;">Source</div><div class="a" style="left:233px;top:112px;width:668px;height:464px;background:#fff;border-right:1px solid #aaa;border-bottom:1px solid #9a9a9a;"></div><div class="a" style="left:233px;top:112px;width:75px;height:17px;background:#ebebeb;border-right:1px solid #8c8c8c;border-bottom:1px solid #8c8c8c;box-shadow:inset 1px 1px 0 #fff;"></div><div class="a" style="left:308px;top:112px;width:60px;height:17px;background:#ebebeb;border-right:1px solid #8c8c8c;border-bottom:1px solid #8c8c8c;box-shadow:inset 1px 1px 0 #fff;"></div><div class="a" style="left:368px;top:112px;width:30px;height:17px;background:#ebebeb;border-right:1px solid #8c8c8c;border-bottom:1px solid #8c8c8c;box-shadow:inset 1px 1px 0 #fff;"></div><div class="a" style="left:398px;top:112px;width:487px;height:17px;background:#ebebeb;border-right:1px solid #8c8c8c;border-bottom:1px solid #8c8c8c;box-shadow:inset 1px 1px 0 #fff;border-right:none;"></div><div class="t" style="left:242.9px;top:113.58px;font-size:13.5px;line-height:15.52px;font-weight:normal;color:#333;letter-spacing:0.45px;font-family:'Liberation Sans', sans-serif;">Line No.</div><div class="t" style="left:320.2px;top:113.58px;font-size:13.5px;line-height:15.52px;font-weight:normal;color:#333;letter-spacing:0.3px;font-family:'Liberation Sans', sans-serif;">Event</div><div class="t" style="left:374px;top:113.58px;font-size:13.5px;line-height:15.52px;font-weight:normal;color:#333;letter-spacing:-0.5px;font-family:'Liberation Sans', sans-serif;">PC</div><div class="t" style="left:402.7px;top:113.58px;font-size:13.5px;line-height:15.52px;font-weight:normal;color:#333;letter-spacing:1.2px;font-family:'Liberation Sans', sans-serif;">/home/lionel/MAS/mas50/pmas_0.2.1.3.f</div><div class="a" style="left:885px;top:129px;width:16px;height:431px;background:#eeeeee;border-left:1px solid #8e8e8e;border-right:1px solid #8e8e8e;"></div><div class="a" style="left:885px;top:129px;width:16px;height:16px;background:#eeeeee;border:1px solid #8e8e8e;box-shadow:inset 1px 1px 0 #fafafa;"></div><svg class="a" style="left:888.5px;top:134px" width="9" height="5" viewBox="0 0 9 5"><path d="M0 4.3 L4.3 0 L8.6 4.3 Z" fill="#1e1e1e"/></svg><div class="a" style="left:885px;top:544px;width:16px;height:16px;background:#eeeeee;border:1px solid #8e8e8e;box-shadow:inset 1px 1px 0 #fafafa;"></div><svg class="a" style="left:889px;top:550.5px" width="9" height="5" viewBox="0 0 9 5"><path d="M0 0.2 L8.2 0.2 L4.1 4.3 Z" fill="#1e1e1e"/></svg><div class="a" style="left:885px;top:174px;width:16px;height:15px;background:linear-gradient(#d0d0d0,#ffffff);border:1px solid #8e8e8e;"></div><svg class="a" style="left:889px;top:177px" width="8" height="8" viewBox="0 0 8 8"><path d="M0 1.5 H8 M0 4 H8 M0 6.5 H8" stroke="#6a88b8" stroke-width="1"/></svg><div class="a" style="left:233px;top:560px;width:652px;height:16px;background:#eeeeee;border-top:1px solid #8e8e8e;border-bottom:1px solid #8e8e8e;"></div><div class="a" style="left:233px;top:560px;width:16px;height:16px;background:#eeeeee;border:1px solid #8e8e8e;box-shadow:inset 1px 1px 0 #fafafa;"></div><svg class="a" style="left:237.5px;top:564px" width="5" height="9" viewBox="0 0 5 9"><path d="M4.3 0 L0.2 4.1 L4.3 8.2 Z" fill="#1e1e1e"/></svg><div class="a" style="left:869px;top:560px;width:16px;height:16px;background:#eeeeee;border:1px solid #8e8e8e;box-shadow:inset 1px 1px 0 #fafafa;"></div><svg class="a" style="left:876px;top:564px" width="5" height="9" viewBox="0 0 5 9"><path d="M0.2 0 L4.3 4.1 L0.2 8.2 Z" fill="#1e1e1e"/></svg><div class="a" style="left:248px;top:560px;width:344px;height:16px;background:linear-gradient(90deg,#d0d0d0,#ffffff);border:1px solid #8e8e8e;"></div><svg class="a" style="left:416px;top:564px" width="8" height="8" viewBox="0 0 8 8"><path d="M1.5 0 V8 M4 0 V8 M6.5 0 V8" stroke="#6a88b8" stroke-width="1"/></svg><div class="a" style="left:233px;top:129px;width:652px;height:431px;overflow:hidden;"><div class="t" style="left:0;top:0px;width:652px;height:16px;font-family:'Liberation Mono', monospace;font-size:12.5px;letter-spacing:-0.5px;line-height:16px;"><span style="position:absolute;right:579.5px;top:0.5px;color:#111">2881</span><span style="position:absolute;left:80.5px;top:0.5px;color:#111">                    if (advance_tc) call advtc</span></div><div class="t" style="left:0;top:16px;width:652px;height:16px;font-family:'Liberation Mono', monospace;font-size:12.5px;letter-spacing:-0.5px;line-height:16px;"><span style="position:absolute;right:579.5px;top:0.5px;color:#111">2882</span><span style="position:absolute;left:80.5px;top:0.5px;color:#111">                    if (advance_rho) call advrho</span></div><div class="t" style="left:0;top:32px;width:652px;height:16px;font-family:'Liberation Mono', monospace;font-size:12.5px;letter-spacing:-0.5px;line-height:16px;"><span style="position:absolute;right:579.5px;top:0.5px;color:#111">2883</span><span style="position:absolute;left:80.5px;top:0.5px;color:#111">                    call setp</span></div><div class="t" style="left:0;top:48px;width:652px;height:16px;font-family:'Liberation Mono', monospace;font-size:12.5px;letter-spacing:-0.5px;line-height:16px;"><span style="position:absolute;right:579.5px;top:0.5px;color:#111">2884</span><span style="position:absolute;left:80.5px;top:0.5px;color:#111">                    if (advance_pw) call advpw</span></div><div class="t" style="left:0;top:64px;width:652px;height:16px;font-family:'Liberation Mono', monospace;font-size:12.5px;letter-spacing:-0.5px;line-height:16px;"><span style="position:absolute;right:579.5px;top:0.5px;color:#111">2885</span><span style="position:absolute;left:80.5px;top:0.5px;color:#111">                    if (advance_v) call advv</span></div><div class="t" style="left:0;top:80px;width:652px;height:16px;font-family:'Liberation Mono', monospace;font-size:12.5px;letter-spacing:-0.5px;line-height:16px;"><span style="position:absolute;right:579.5px;top:0.5px;color:#8a8a8a">2886</span><span style="position:absolute;left:80.5px;top:0.5px;color:#111">            c</span></div><div class="t" style="left:0;top:96px;width:652px;height:16px;font-family:'Liberation Mono', monospace;font-size:12.5px;letter-spacing:-0.5px;line-height:16px;"><span style="position:absolute;right:579.5px;top:0.5px;color:#8a8a8a">2887</span><span style="position:absolute;left:80.5px;top:0.5px;color:#111">            c ****** Calculate energy diagnostics.</span></div><div class="t" style="left:0;top:112px;width:652px;height:16px;font-family:'Liberation Mono', monospace;font-size:12.5px;letter-spacing:-0.5px;line-height:16px;"><span style="position:absolute;right:579.5px;top:0.5px;color:#8a8a8a">2888</span><span style="position:absolute;left:80.5px;top:0.5px;color:#111">            c</span></div><div class="t" style="left:0;top:128px;width:652px;height:16px;font-family:'Liberation Mono', monospace;font-size:12.5px;letter-spacing:-0.5px;line-height:16px;"><span style="position:absolute;right:579.5px;top:0.5px;color:#111">2889</span><span style="position:absolute;left:80.5px;top:0.5px;color:#111">                    call energy</span></div><div class="t" style="left:0;top:144px;width:652px;height:16px;font-family:'Liberation Mono', monospace;font-size:12.5px;letter-spacing:-0.5px;line-height:16px;"><span style="position:absolute;right:579.5px;top:0.5px;color:#111">2890</span><span style="position:absolute;left:80.5px;top:0.5px;color:#111">                    call energy_diag</span></div><div class="t" style="left:0;top:160px;width:652px;height:16px;font-family:'Liberation Mono', monospace;font-size:12.5px;letter-spacing:-0.5px;line-height:16px;"><span style="position:absolute;right:579.5px;top:0.5px;color:#8a8a8a">2891</span><span style="position:absolute;left:80.5px;top:0.5px;color:#111">            c</span></div><div class="t" style="left:0;top:176px;width:652px;height:16px;font-family:'Liberation Mono', monospace;font-size:12.5px;letter-spacing:-0.5px;line-height:16px;"><span style="position:absolute;right:579.5px;top:0.5px;color:#8a8a8a">2892</span><span style="position:absolute;left:80.5px;top:0.5px;color:#111">            c ****** Set the time step for the next step.</span></div><div class="t" style="left:0;top:192px;width:652px;height:16px;font-family:'Liberation Mono', monospace;font-size:12.5px;letter-spacing:-0.5px;line-height:16px;"><span style="position:absolute;right:579.5px;top:0.5px;color:#8a8a8a">2893</span><span style="position:absolute;left:80.5px;top:0.5px;color:#111">            c</span></div><div class="t" style="left:0;top:208px;width:652px;height:16px;font-family:'Liberation Mono', monospace;font-size:12.5px;letter-spacing:-0.5px;line-height:16px;"><span style="position:absolute;right:579.5px;top:0.5px;color:#111">2894</span><span style="position:absolute;left:80.5px;top:0.5px;color:#111">                    call setdt</span></div><div class="t" style="left:0;top:224px;width:652px;height:16px;font-family:'Liberation Mono', monospace;font-size:12.5px;letter-spacing:-0.5px;line-height:16px;"><span style="position:absolute;right:579.5px;top:0.5px;color:#8a8a8a">2895</span><span style="position:absolute;left:80.5px;top:0.5px;color:#111">            c</span></div><div class="t" style="left:0;top:240px;width:652px;height:16px;font-family:'Liberation Mono', monospace;font-size:12.5px;letter-spacing:-0.5px;line-height:16px;"><span style="position:absolute;right:579.5px;top:0.5px;color:#8a8a8a">2896</span><span style="position:absolute;left:80.5px;top:0.5px;color:#111">            c ****** Collect and plot diagnostics.</span></div><div class="t" style="left:0;top:256px;width:652px;height:16px;font-family:'Liberation Mono', monospace;font-size:12.5px;letter-spacing:-0.5px;line-height:16px;"><span style="position:absolute;right:579.5px;top:0.5px;color:#8a8a8a">2897</span><span style="position:absolute;left:80.5px;top:0.5px;color:#111">            c</span></div><div class="t" style="left:0;top:272px;width:652px;height:16px;font-family:'Liberation Mono', monospace;font-size:12.5px;letter-spacing:-0.5px;line-height:16px;"><span style="position:absolute;right:579.5px;top:0.5px;color:#111">2898</span><span style="position:absolute;left:80.5px;top:0.5px;color:#111">                    call diags</span></div><div class="t" style="left:0;top:288px;width:652px;height:16px;font-family:'Liberation Mono', monospace;font-size:12.5px;letter-spacing:-0.5px;line-height:16px;"><span style="position:absolute;right:579.5px;top:0.5px;color:#8a8a8a">2899</span><span style="position:absolute;left:80.5px;top:0.5px;color:#111">            c</span></div><div class="t" style="left:0;top:304px;width:652px;height:16px;font-family:'Liberation Mono', monospace;font-size:12.5px;letter-spacing:-0.5px;line-height:16px;"><span style="position:absolute;right:579.5px;top:0.5px;color:#8a8a8a">2900</span><span style="position:absolute;left:80.5px;top:0.5px;color:#111">            c ****** Check if finished.</span></div><div class="t" style="left:0;top:320px;width:652px;height:16px;font-family:'Liberation Mono', monospace;font-size:12.5px;letter-spacing:-0.5px;line-height:16px;"><span style="position:absolute;right:579.5px;top:0.5px;color:#8a8a8a">2901</span><span style="position:absolute;left:80.5px;top:0.5px;color:#111">            c</span></div><div class="t" style="left:0;top:336px;width:652px;height:16px;font-family:'Liberation Mono', monospace;font-size:12.5px;letter-spacing:-0.5px;line-height:16px;"><span style="position:absolute;right:579.5px;top:0.5px;color:#8a8a8a">2902</span><span style="position:absolute;left:80.5px;top:0.5px;color:#111">            c ****** Set logical flag IFEND=.true. when the run is over.</span></div><div class="t" style="left:0;top:352px;width:652px;height:16px;font-family:'Liberation Mono', monospace;font-size:12.5px;letter-spacing:-0.5px;line-height:16px;"><span style="position:absolute;right:579.5px;top:0.5px;color:#8a8a8a">2903</span><span style="position:absolute;left:80.5px;top:0.5px;color:#111">            c</span></div><div class="t" style="left:0;top:368px;width:652px;height:16px;font-family:'Liberation Mono', monospace;font-size:12.5px;letter-spacing:-0.5px;line-height:16px;"><span style="position:absolute;right:579.5px;top:0.5px;color:#111">2904</span><span style="position:absolute;left:80.5px;top:0.5px;color:#111">                    if (ntime.ge.ntmax.or.time.ge.tmax) ifend=.true.</span></div><div class="t" style="left:0;top:384px;width:652px;height:16px;font-family:'Liberation Mono', monospace;font-size:12.5px;letter-spacing:-0.5px;line-height:16px;"><span style="position:absolute;right:579.5px;top:0.5px;color:#8a8a8a">2905</span><span style="position:absolute;left:80.5px;top:0.5px;color:#111">            c</span></div><div class="t" style="left:0;top:400px;width:652px;height:16px;font-family:'Liberation Mono', monospace;font-size:12.5px;letter-spacing:-0.5px;line-height:16px;"><span style="position:absolute;right:579.5px;top:0.5px;color:#8a8a8a">2906</span><span style="position:absolute;left:80.5px;top:0.5px;color:#111">            c ****** Check if the user has requested to stop the run</span></div><div class="t" style="left:0;top:416px;width:652px;height:16px;font-family:'Liberation Mono', monospace;font-size:12.5px;letter-spacing:-0.5px;line-height:16px;"><span style="position:absolute;right:579.5px;top:0.5px;color:#8a8a8a">2907</span><span style="position:absolute;left:80.5px;top:0.5px;color:#111">            c ****** prematurely.</span></div></div><div class="a" style="left:233px;top:577px;width:594px;height:26px;border:1px solid #c8c8c8;border-radius:4px;background:#f0f0f0;"></div><div class="a" style="left:234px;top:578px;width:574px;height:24px;background:linear-gradient(#f6f6f6,#ececec);border-radius:3px 0 0 3px;"></div><div class="a" style="left:808px;top:578px;width:18px;height:24px;background:linear-gradient(#e4e4e4,#d8d8d8);border-left:1px solid #d0d0d0;border-radius:0 3px 3px 0;"></div><svg class="a" style="left:812px;top:587px" width="10" height="8" viewBox="0 0 10 8"><path d="M1 1.5 H9 L5 5.5 Z" fill="#b8b8b8"/></svg><div class="t" style="left:235.5px;top:584.8378px;font-family:'Liberation Mono', monospace;font-size:13.4px;letter-spacing:-0.04px;line-height:15.1822px;color:#bcc2ca;">#0 mas line: 2825 in &quot;pmas_0.2.1.3.f&quot; address: 0x4081a4</div><div class="a" style="left:832px;top:582px;width:30px;height:16px;border:1px solid #222;border-radius:6px;box-shadow:inset 0 0 0 1px #e8f0fc;background:linear-gradient(90deg,#5e96ee,#9ebef4 50%,#d0ddf6);"></div><svg class="a" style="left:838px;top:583px" width="18" height="14" viewBox="0 0 18 14"><path d="M3.5 4.5 L8.8 9.5 L14 4.5" stroke="#1a1a2a" stroke-width="4.4" fill="none" stroke-linejoin="round" stroke-linecap="round"/><path d="M3.5 4.5 L8.8 9.5 L14 4.5" stroke="#c8c8c4" stroke-width="2.2" fill="none" stroke-linecap="round"/></svg><div class="a" style="left:867px;top:582px;width:30px;height:16px;border:1px solid #222;border-radius:6px;box-shadow:inset 0 0 0 1px #e8f0fc;background:linear-gradient(90deg,#5e96ee,#9ebef4 50%,#d0ddf6);"></div><svg class="a" style="left:873px;top:583px" width="18" height="14" viewBox="0 0 18 14"><path d="M3.8 8.5 L9 3.5 L14.2 8.5" stroke="#1a1a2a" stroke-width="4.4" fill="none" stroke-linejoin="round" stroke-linecap="round"/><path d="M3.8 8.5 L9 3.5 L14.2 8.5" stroke="#c8c8c4" stroke-width="2.2" fill="none" stroke-linecap="round"/></svg><svg class="a" style="left:228px;top:612px" width="680" height="3" viewBox="0 0 680 3"><rect x="0" y="0" width="1" height="1" fill="#888"/><rect x="4" y="0" width="1" height="1" fill="#888"/><rect x="8" y="0" width="1" height="1" fill="#888"/><rect x="12" y="0" width="1" height="1" fill="#888"/><rect x="16" y="0" width="1" height="1" fill="#888"/><rect x="20" y="0" width="1" height="1" fill="#888"/><rect x="24" y="0" width="1" height="1" fill="#888"/><rect x="28" y="0" width="1" height="1" fill="#888"/><rect x="32" y="0" width="1" height="1" fill="#888"/><rect x="36" y="0" width="1" height="1" fill="#888"/><rect x="40" y="0" width="1" height="1" fill="#888"/><rect x="44" y="0" width="1" height="1" fill="#888"/><rect x="48" y="0" width="1" height="1" fill="#888"/><rect x="52" y="0" width="1" height="1" fill="#888"/><rect x="56" y="0" width="1" height="1" fill="#888"/><rect x="60" y="0" width="1" height="1" fill="#888"/><rect x="64" y="0" width="1" height="1" fill="#888"/><rect x="68" y="0" width="1" height="1" fill="#888"/><rect x="72" y="0" width="1" height="1" fill="#888"/><rect x="76" y="0" width="1" height="1" fill="#888"/><rect x="80" y="0" width="1" height="1" fill="#888"/><rect x="84" y="0" width="1" height="1" fill="#888"/><rect x="88" y="0" width="1" height="1" fill="#888"/><rect x="92" y="0" width="1" height="1" fill="#888"/><rect x="96" y="0" width="1" height="1" fill="#888"/><rect x="100" y="0" width="1" height="1" fill="#888"/><rect x="104" y="0" width="1" height="1" fill="#888"/><rect x="108" y="0" width="1" height="1" fill="#888"/><rect x="112" y="0" width="1" height="1" fill="#888"/><rect x="116" y="0" width="1" height="1" fill="#888"/><rect x="120" y="0" width="1" height="1" fill="#888"/><rect x="124" y="0" width="1" height="1" fill="#888"/><rect x="128" y="0" width="1" height="1" fill="#888"/><rect x="132" y="0" width="1" height="1" fill="#888"/><rect x="136" y="0" width="1" height="1" fill="#888"/><rect x="140" y="0" width="1" height="1" fill="#888"/><rect x="144" y="0" width="1" height="1" fill="#888"/><rect x="148" y="0" width="1" height="1" fill="#888"/><rect x="152" y="0" width="1" height="1" fill="#888"/><rect x="156" y="0" width="1" height="1" fill="#888"/><rect x="160" y="0" width="1" height="1" fill="#888"/><rect x="164" y="0" width="1" height="1" fill="#888"/><rect x="168" y="0" width="1" height="1" fill="#888"/><rect x="172" y="0" width="1" height="1" fill="#888"/><rect x="176" y="0" width="1" height="1" fill="#888"/><rect x="180" y="0" width="1" height="1" fill="#888"/><rect x="184" y="0" width="1" height="1" fill="#888"/><rect x="188" y="0" width="1" height="1" fill="#888"/><rect x="192" y="0" width="1" height="1" fill="#888"/><rect x="196" y="0" width="1" height="1" fill="#888"/><rect x="200" y="0" width="1" height="1" fill="#888"/><rect x="204" y="0" width="1" height="1" fill="#888"/><rect x="208" y="0" width="1" height="1" fill="#888"/><rect x="212" y="0" width="1" height="1" fill="#888"/><rect x="216" y="0" width="1" height="1" fill="#888"/><rect x="220" y="0" width="1" height="1" fill="#888"/><rect x="224" y="0" width="1" height="1" fill="#888"/><rect x="228" y="0" width="1" height="1" fill="#888"/><rect x="232" y="0" width="1" height="1" fill="#888"/><rect x="236" y="0" width="1" height="1" fill="#888"/><rect x="240" y="0" width="1" height="1" fill="#888"/><rect x="244" y="0" width="1" height="1" fill="#888"/><rect x="248" y="0" width="1" height="1" fill="#888"/><rect x="252" y="0" width="1" height="1" fill="#888"/><rect x="256" y="0" width="1" height="1" fill="#888"/><rect x="260" y="0" width="1" height="1" fill="#888"/><rect x="264" y="0" width="1" height="1" fill="#888"/><rect x="268" y="0" width="1" height="1" fill="#888"/><rect x="272" y="0" width="1" height="1" fill="#888"/><rect x="276" y="0" width="1" height="1" fill="#888"/><rect x="280" y="0" width="1" height="1" fill="#888"/><rect x="284" y="0" width="1" height="1" fill="#888"/><rect x="288" y="0" width="1" height="1" fill="#888"/><rect x="292" y="0" width="1" height="1" fill="#888"/><rect x="296" y="0" width="1" height="1" fill="#888"/><rect x="300" y="0" width="1" height="1" fill="#888"/><rect x="304" y="0" width="1" height="1" fill="#888"/><rect x="308" y="0" width="1" height="1" fill="#888"/><rect x="312" y="0" width="1" height="1" fill="#888"/><rect x="316" y="0" width="1" height="1" fill="#888"/><rect x="320" y="0" width="1" height="1" fill="#888"/><rect x="324" y="0" width="1" height="1" fill="#888"/><rect x="328" y="0" width="1" height="1" fill="#888"/><rect x="332" y="0" width="1" height="1" fill="#888"/><rect x="336" y="0" width="1" height="1" fill="#888"/><rect x="340" y="0" width="1" height="1" fill="#888"/><rect x="344" y="0" width="1" height="1" fill="#888"/><rect x="348" y="0" width="1" height="1" fill="#888"/><rect x="352" y="0" width="1" height="1" fill="#888"/><rect x="356" y="0" width="1" height="1" fill="#888"/><rect x="360" y="0" width="1" height="1" fill="#888"/><rect x="364" y="0" width="1" height="1" fill="#888"/><rect x="368" y="0" width="1" height="1" fill="#888"/><rect x="372" y="0" width="1" height="1" fill="#888"/><rect x="376" y="0" width="1" height="1" fill="#888"/><rect x="380" y="0" width="1" height="1" fill="#888"/><rect x="384" y="0" width="1" height="1" fill="#888"/><rect x="388" y="0" width="1" height="1" fill="#888"/><rect x="392" y="0" width="1" height="1" fill="#888"/><rect x="396" y="0" width="1" height="1" fill="#888"/><rect x="400" y="0" width="1" height="1" fill="#888"/><rect x="404" y="0" width="1" height="1" fill="#888"/><rect x="408" y="0" width="1" height="1" fill="#888"/><rect x="412" y="0" width="1" height="1" fill="#888"/><rect x="416" y="0" width="1" height="1" fill="#888"/><rect x="420" y="0" width="1" height="1" fill="#888"/><rect x="424" y="0" width="1" height="1" fill="#888"/><rect x="428" y="0" width="1" height="1" fill="#888"/><rect x="432" y="0" width="1" height="1" fill="#888"/><rect x="436" y="0" width="1" height="1" fill="#888"/><rect x="440" y="0" width="1" height="1" fill="#888"/><rect x="444" y="0" width="1" height="1" fill="#888"/><rect x="448" y="0" width="1" height="1" fill="#888"/><rect x="452" y="0" width="1" height="1" fill="#888"/><rect x="456" y="0" width="1" height="1" fill="#888"/><rect x="460" y="0" width="1" height="1" fill="#888"/><rect x="464" y="0" width="1" height="1" fill="#888"/><rect x="468" y="0" width="1" height="1" fill="#888"/><rect x="472" y="0" width="1" height="1" fill="#888"/><rect x="476" y="0" width="1" height="1" fill="#888"/><rect x="480" y="0" width="1" height="1" fill="#888"/><rect x="484" y="0" width="1" height="1" fill="#888"/><rect x="488" y="0" width="1" height="1" fill="#888"/><rect x="492" y="0" width="1" height="1" fill="#888"/><rect x="496" y="0" width="1" height="1" fill="#888"/><rect x="500" y="0" width="1" height="1" fill="#888"/><rect x="504" y="0" width="1" height="1" fill="#888"/><rect x="508" y="0" width="1" height="1" fill="#888"/><rect x="512" y="0" width="1" height="1" fill="#888"/><rect x="516" y="0" width="1" height="1" fill="#888"/><rect x="520" y="0" width="1" height="1" fill="#888"/><rect x="524" y="0" width="1" height="1" fill="#888"/><rect x="528" y="0" width="1" height="1" fill="#888"/><rect x="532" y="0" width="1" height="1" fill="#888"/><rect x="536" y="0" width="1" height="1" fill="#888"/><rect x="540" y="0" width="1" height="1" fill="#888"/><rect x="544" y="0" width="1" height="1" fill="#888"/><rect x="548" y="0" width="1" height="1" fill="#888"/><rect x="552" y="0" width="1" height="1" fill="#888"/><rect x="556" y="0" width="1" height="1" fill="#888"/><rect x="560" y="0" width="1" height="1" fill="#888"/><rect x="564" y="0" width="1" height="1" fill="#888"/><rect x="568" y="0" width="1" height="1" fill="#888"/><rect x="572" y="0" width="1" height="1" fill="#888"/><rect x="576" y="0" width="1" height="1" fill="#888"/><rect x="580" y="0" width="1" height="1" fill="#888"/><rect x="584" y="0" width="1" height="1" fill="#888"/><rect x="588" y="0" width="1" height="1" fill="#888"/><rect x="592" y="0" width="1" height="1" fill="#888"/><rect x="596" y="0" width="1" height="1" fill="#888"/><rect x="600" y="0" width="1" height="1" fill="#888"/><rect x="604" y="0" width="1" height="1" fill="#888"/><rect x="608" y="0" width="1" height="1" fill="#888"/><rect x="612" y="0" width="1" height="1" fill="#888"/><rect x="616" y="0" width="1" height="1" fill="#888"/><rect x="620" y="0" width="1" height="1" fill="#888"/><rect x="624" y="0" width="1" height="1" fill="#888"/><rect x="628" y="0" width="1" height="1" fill="#888"/><rect x="632" y="0" width="1" height="1" fill="#888"/><rect x="636" y="0" width="1" height="1" fill="#888"/><rect x="640" y="0" width="1" height="1" fill="#888"/><rect x="644" y="0" width="1" height="1" fill="#888"/><rect x="648" y="0" width="1" height="1" fill="#888"/><rect x="652" y="0" width="1" height="1" fill="#888"/><rect x="656" y="0" width="1" height="1" fill="#888"/><rect x="660" y="0" width="1" height="1" fill="#888"/><rect x="664" y="0" width="1" height="1" fill="#888"/><rect x="668" y="0" width="1" height="1" fill="#888"/><rect x="672" y="0" width="1" height="1" fill="#888"/><rect x="676" y="0" width="1" height="1" fill="#888"/><rect x="2" y="2" width="1" height="1" fill="#888"/><rect x="6" y="2" width="1" height="1" fill="#888"/><rect x="10" y="2" width="1" height="1" fill="#888"/><rect x="14" y="2" width="1" height="1" fill="#888"/><rect x="18" y="2" width="1" height="1" fill="#888"/><rect x="22" y="2" width="1" height="1" fill="#888"/><rect x="26" y="2" width="1" height="1" fill="#888"/><rect x="30" y="2" width="1" height="1" fill="#888"/><rect x="34" y="2" width="1" height="1" fill="#888"/><rect x="38" y="2" width="1" height="1" fill="#888"/><rect x="42" y="2" width="1" height="1" fill="#888"/><rect x="46" y="2" width="1" height="1" fill="#888"/><rect x="50" y="2" width="1" height="1" fill="#888"/><rect x="54" y="2" width="1" height="1" fill="#888"/><rect x="58" y="2" width="1" height="1" fill="#888"/><rect x="62" y="2" width="1" height="1" fill="#888"/><rect x="66" y="2" width="1" height="1" fill="#888"/><rect x="70" y="2" width="1" height="1" fill="#888"/><rect x="74" y="2" width="1" height="1" fill="#888"/><rect x="78" y="2" width="1" height="1" fill="#888"/><rect x="82" y="2" width="1" height="1" fill="#888"/><rect x="86" y="2" width="1" height="1" fill="#888"/><rect x="90" y="2" width="1" height="1" fill="#888"/><rect x="94" y="2" width="1" height="1" fill="#888"/><rect x="98" y="2" width="1" height="1" fill="#888"/><rect x="102" y="2" width="1" height="1" fill="#888"/><rect x="106" y="2" width="1" height="1" fill="#888"/><rect x="110" y="2" width="1" height="1" fill="#888"/><rect x="114" y="2" width="1" height="1" fill="#888"/><rect x="118" y="2" width="1" height="1" fill="#888"/><rect x="122" y="2" width="1" height="1" fill="#888"/><rect x="126" y="2" width="1" height="1" fill="#888"/><rect x="130" y="2" width="1" height="1" fill="#888"/><rect x="134" y="2" width="1" height="1" fill="#888"/><rect x="138" y="2" width="1" height="1" fill="#888"/><rect x="142" y="2" width="1" height="1" fill="#888"/><rect x="146" y="2" width="1" height="1" fill="#888"/><rect x="150" y="2" width="1" height="1" fill="#888"/><rect x="154" y="2" width="1" height="1" fill="#888"/><rect x="158" y="2" width="1" height="1" fill="#888"/><rect x="162" y="2" width="1" height="1" fill="#888"/><rect x="166" y="2" width="1" height="1" fill="#888"/><rect x="170" y="2" width="1" height="1" fill="#888"/><rect x="174" y="2" width="1" height="1" fill="#888"/><rect x="178" y="2" width="1" height="1" fill="#888"/><rect x="182" y="2" width="1" height="1" fill="#888"/><rect x="186" y="2" width="1" height="1" fill="#888"/><rect x="190" y="2" width="1" height="1" fill="#888"/><rect x="194" y="2" width="1" height="1" fill="#888"/><rect x="198" y="2" width="1" height="1" fill="#888"/><rect x="202" y="2" width="1" height="1" fill="#888"/><rect x="206" y="2" width="1" height="1" fill="#888"/><rect x="210" y="2" width="1" height="1" fill="#888"/><rect x="214" y="2" width="1" height="1" fill="#888"/><rect x="218" y="2" width="1" height="1" fill="#888"/><rect x="222" y="2" width="1" height="1" fill="#888"/><rect x="226" y="2" width="1" height="1" fill="#888"/><rect x="230" y="2" width="1" height="1" fill="#888"/><rect x="234" y="2" width="1" height="1" fill="#888"/><rect x="238" y="2" width="1" height="1" fill="#888"/><rect x="242" y="2" width="1" height="1" fill="#888"/><rect x="246" y="2" width="1" height="1" fill="#888"/><rect x="250" y="2" width="1" height="1" fill="#888"/><rect x="254" y="2" width="1" height="1" fill="#888"/><rect x="258" y="2" width="1" height="1" fill="#888"/><rect x="262" y="2" width="1" height="1" fill="#888"/><rect x="266" y="2" width="1" height="1" fill="#888"/><rect x="270" y="2" width="1" height="1" fill="#888"/><rect x="274" y="2" width="1" height="1" fill="#888"/><rect x="278" y="2" width="1" height="1" fill="#888"/><rect x="282" y="2" width="1" height="1" fill="#888"/><rect x="286" y="2" width="1" height="1" fill="#888"/><rect x="290" y="2" width="1" height="1" fill="#888"/><rect x="294" y="2" width="1" height="1" fill="#888"/><rect x="298" y="2" width="1" height="1" fill="#888"/><rect x="302" y="2" width="1" height="1" fill="#888"/><rect x="306" y="2" width="1" height="1" fill="#888"/><rect x="310" y="2" width="1" height="1" fill="#888"/><rect x="314" y="2" width="1" height="1" fill="#888"/><rect x="318" y="2" width="1" height="1" fill="#888"/><rect x="322" y="2" width="1" height="1" fill="#888"/><rect x="326" y="2" width="1" height="1" fill="#888"/><rect x="330" y="2" width="1" height="1" fill="#888"/><rect x="334" y="2" width="1" height="1" fill="#888"/><rect x="338" y="2" width="1" height="1" fill="#888"/><rect x="342" y="2" width="1" height="1" fill="#888"/><rect x="346" y="2" width="1" height="1" fill="#888"/><rect x="350" y="2" width="1" height="1" fill="#888"/><rect x="354" y="2" width="1" height="1" fill="#888"/><rect x="358" y="2" width="1" height="1" fill="#888"/><rect x="362" y="2" width="1" height="1" fill="#888"/><rect x="366" y="2" width="1" height="1" fill="#888"/><rect x="370" y="2" width="1" height="1" fill="#888"/><rect x="374" y="2" width="1" height="1" fill="#888"/><rect x="378" y="2" width="1" height="1" fill="#888"/><rect x="382" y="2" width="1" height="1" fill="#888"/><rect x="386" y="2" width="1" height="1" fill="#888"/><rect x="390" y="2" width="1" height="1" fill="#888"/><rect x="394" y="2" width="1" height="1" fill="#888"/><rect x="398" y="2" width="1" height="1" fill="#888"/><rect x="402" y="2" width="1" height="1" fill="#888"/><rect x="406" y="2" width="1" height="1" fill="#888"/><rect x="410" y="2" width="1" height="1" fill="#888"/><rect x="414" y="2" width="1" height="1" fill="#888"/><rect x="418" y="2" width="1" height="1" fill="#888"/><rect x="422" y="2" width="1" height="1" fill="#888"/><rect x="426" y="2" width="1" height="1" fill="#888"/><rect x="430" y="2" width="1" height="1" fill="#888"/><rect x="434" y="2" width="1" height="1" fill="#888"/><rect x="438" y="2" width="1" height="1" fill="#888"/><rect x="442" y="2" width="1" height="1" fill="#888"/><rect x="446" y="2" width="1" height="1" fill="#888"/><rect x="450" y="2" width="1" height="1" fill="#888"/><rect x="454" y="2" width="1" height="1" fill="#888"/><rect x="458" y="2" width="1" height="1" fill="#888"/><rect x="462" y="2" width="1" height="1" fill="#888"/><rect x="466" y="2" width="1" height="1" fill="#888"/><rect x="470" y="2" width="1" height="1" fill="#888"/><rect x="474" y="2" width="1" height="1" fill="#888"/><rect x="478" y="2" width="1" height="1" fill="#888"/><rect x="482" y="2" width="1" height="1" fill="#888"/><rect x="486" y="2" width="1" height="1" fill="#888"/><rect x="490" y="2" width="1" height="1" fill="#888"/><rect x="494" y="2" width="1" height="1" fill="#888"/><rect x="498" y="2" width="1" height="1" fill="#888"/><rect x="502" y="2" width="1" height="1" fill="#888"/><rect x="506" y="2" width="1" height="1" fill="#888"/><rect x="510" y="2" width="1" height="1" fill="#888"/><rect x="514" y="2" width="1" height="1" fill="#888"/><rect x="518" y="2" width="1" height="1" fill="#888"/><rect x="522" y="2" width="1" height="1" fill="#888"/><rect x="526" y="2" width="1" height="1" fill="#888"/><rect x="530" y="2" width="1" height="1" fill="#888"/><rect x="534" y="2" width="1" height="1" fill="#888"/><rect x="538" y="2" width="1" height="1" fill="#888"/><rect x="542" y="2" width="1" height="1" fill="#888"/><rect x="546" y="2" width="1" height="1" fill="#888"/><rect x="550" y="2" width="1" height="1" fill="#888"/><rect x="554" y="2" width="1" height="1" fill="#888"/><rect x="558" y="2" width="1" height="1" fill="#888"/><rect x="562" y="2" width="1" height="1" fill="#888"/><rect x="566" y="2" width="1" height="1" fill="#888"/><rect x="570" y="2" width="1" height="1" fill="#888"/><rect x="574" y="2" width="1" height="1" fill="#888"/><rect x="578" y="2" width="1" height="1" fill="#888"/><rect x="582" y="2" width="1" height="1" fill="#888"/><rect x="586" y="2" width="1" height="1" fill="#888"/><rect x="590" y="2" width="1" height="1" fill="#888"/><rect x="594" y="2" width="1" height="1" fill="#888"/><rect x="598" y="2" width="1" height="1" fill="#888"/><rect x="602" y="2" width="1" height="1" fill="#888"/><rect x="606" y="2" width="1" height="1" fill="#888"/><rect x="610" y="2" width="1" height="1" fill="#888"/><rect x="614" y="2" width="1" height="1" fill="#888"/><rect x="618" y="2" width="1" height="1" fill="#888"/><rect x="622" y="2" width="1" height="1" fill="#888"/><rect x="626" y="2" width="1" height="1" fill="#888"/><rect x="630" y="2" width="1" height="1" fill="#888"/><rect x="634" y="2" width="1" height="1" fill="#888"/><rect x="638" y="2" width="1" height="1" fill="#888"/><rect x="642" y="2" width="1" height="1" fill="#888"/><rect x="646" y="2" width="1" height="1" fill="#888"/><rect x="650" y="2" width="1" height="1" fill="#888"/><rect x="654" y="2" width="1" height="1" fill="#888"/><rect x="658" y="2" width="1" height="1" fill="#888"/><rect x="662" y="2" width="1" height="1" fill="#888"/><rect x="666" y="2" width="1" height="1" fill="#888"/><rect x="670" y="2" width="1" height="1" fill="#888"/><rect x="674" y="2" width="1" height="1" fill="#888"/><rect x="678" y="2" width="1" height="1" fill="#888"/></svg><svg class="a" style="left:230px;top:609px" width="22" height="6" viewBox="0 0 22 6"><path d="M1 4.7 L5 1.4 L9 4.7 Z" fill="#6d82b8" stroke="#283058" stroke-width="0.5"/><path d="M13 1.4 L21 1.4 L17 4.9 Z" fill="#6d82b8" stroke="#283058" stroke-width="0.5"/></svg><div class="a" style="left:228px;top:639px;width:680px;height:162px;background:#0c0c48;"></div><div class="a" style="left:229px;top:640px;width:678px;height:160px;background:#4387f0;"></div><div class="a" style="left:230px;top:643px;width:674px;height:155px;background:#e9eef4;"></div><div class="a" style="left:324px;top:619px;width:63px;height:20px;border:1px solid #30343c;border-bottom:none;border-radius:4px 4px 0 0;box-shadow:inset 0 1px 0 #fff;background:linear-gradient(#fafafa,#eaeaea);"></div><div class="t" style="left:334.8px;top:622.59px;font-size:14.6px;line-height:16.79px;font-weight:normal;color:#222;letter-spacing:0.15px;font-family:'Liberation Sans', sans-serif;-webkit-text-stroke:0.45px #222;">Focus</div><div class="a" style="left:229px;top:617px;width:96px;height:24px;border:1px solid #30384c;border-bottom:none;border-radius:4px 4px 0 0;box-shadow:inset 0 1px 0 #fff;background:linear-gradient(#dde8f8 0%,#bcd2f6 30%,#92b8f3 60%,#5a96f0 85%,#4286f0 100%);"></div><div class="t" style="left:241.3px;top:620.79px;font-size:14.6px;line-height:16.79px;font-weight:normal;color:#1c2638;letter-spacing:0.65px;font-family:'Liberation Sans', sans-serif;-webkit-text-stroke:0.45px #1c2638;">Command</div><div class="a" style="left:232px;top:645px;width:669px;height:136px;background:#fff;border:1px solid #9a9a9a;border-bottom:none;"></div><div class="t" style="left:240px;top:644.5px;font-family:'Liberation Mono', monospace;font-size:12.5px;letter-spacing:-0.5px;line-height:16px;color:#111;">#2825:           call setup</div><div class="t" style="left:233.5px;top:674.5px;font-family:'Liberation Mono', monospace;font-size:12.5px;letter-spacing:-0.5px;line-height:16px;color:#111;">pgdbg> libnss_files.so.2 loaded by ld-linux-x86-64.so.2.</div><div class="t" style="left:233.5px;top:689.5px;font-family:'Liberation Mono', monospace;font-size:12.5px;letter-spacing:-0.5px;line-height:16px;color:#111;">libnss_compat.so.2 loaded by ld-linux-x86-64.so.2.</div><div class="t" style="left:233.5px;top:704.5px;font-family:'Liberation Mono', monospace;font-size:12.5px;letter-spacing:-0.5px;line-height:16px;color:#111;">libnsl.so.1 loaded by ld-linux-x86-64.so.2.</div><div class="t" style="left:233.5px;top:719.5px;font-family:'Liberation Mono', monospace;font-size:12.5px;letter-spacing:-0.5px;line-height:16px;color:#111;">libnss_nis.so.2 loaded by ld-linux-x86-64.so.2.</div><div class="t" style="left:233.5px;top:734.5px;font-family:'Liberation Mono', monospace;font-size:12.5px;letter-spacing:-0.5px;line-height:16px;color:#111;">(Process Exited)</div><div class="t" style="left:233.5px;top:764.5px;font-family:'Liberation Mono', monospace;font-size:12.5px;letter-spacing:-0.5px;line-height:16px;color:#111;">pgdbg></div><div class="a" style="left:886px;top:646px;width:16px;height:133px;background:#eeeeee;border-left:1px solid #8e8e8e;border-right:1px solid #8e8e8e;"></div><div class="a" style="left:886px;top:646px;width:16px;height:16px;background:#eeeeee;border:1px solid #8e8e8e;box-shadow:inset 1px 1px 0 #fafafa;"></div><svg class="a" style="left:889.5px;top:651px" width="9" height="5" viewBox="0 0 9 5"><path d="M0 4.3 L4.3 0 L8.6 4.3 Z" fill="#1e1e1e"/></svg><div class="a" style="left:886px;top:763px;width:16px;height:16px;background:#eeeeee;border:1px solid #8e8e8e;box-shadow:inset 1px 1px 0 #fafafa;"></div><svg class="a" style="left:890px;top:769.5px" width="9" height="5" viewBox="0 0 9 5"><path d="M0 0.2 L8.2 0.2 L4.1 4.3 Z" fill="#1e1e1e"/></svg><div class="a" style="left:886px;top:744px;width:16px;height:19px;background:linear-gradient(90deg,#d8d8d8,#ffffff);border:1px solid #9a9a9a;"></div><svg class="a" style="left:890px;top:749px" width="8" height="8" viewBox="0 0 8 8"><path d="M0 1.5 H8 M0 4 H8 M0 6.5 H8" stroke="#6a88b8" stroke-width="1"/></svg><div class="a" style="left:232px;top:779px;width:654px;height:16px;background:#eeeeee;border-top:1px solid #8e8e8e;border-bottom:1px solid #8e8e8e;"></div><div class="a" style="left:232px;top:779px;width:16px;height:16px;background:#eeeeee;border:1px solid #8e8e8e;box-shadow:inset 1px 1px 0 #fafafa;"></div><svg class="a" style="left:236.5px;top:783px" width="5" height="9" viewBox="0 0 5 9"><path d="M4.3 0 L0.2 4.1 L4.3 8.2 Z" fill="#1e1e1e"/></svg><div class="a" style="left:870px;top:779px;width:16px;height:16px;background:#eeeeee;border:1px solid #8e8e8e;box-shadow:inset 1px 1px 0 #fafafa;"></div><svg class="a" style="left:877px;top:783px" width="5" height="9" viewBox="0 0 5 9"><path d="M0.2 0 L4.3 4.1 L0.2 8.2 Z" fill="#1e1e1e"/></svg><div class="a" style="left:248px;top:779px;width:569px;height:16px;background:linear-gradient(90deg,#d0d0d0,#ffffff);border:1px solid #8e8e8e;"></div><svg class="a" style="left:528px;top:783px" width="8" height="8" viewBox="0 0 8 8"><path d="M1.5 0 V8 M4 0 V8 M6.5 0 V8" stroke="#6a88b8" stroke-width="1"/></svg><div class="a" style="left:886px;top:779px;width:16px;height:16px;background:#fff;border-top:1px solid #9a9a9a;"></div><div class="t" style="left:5.0px;top:805.86px;font-size:11.2px;line-height:12.88px;font-weight:normal;color:#222;letter-spacing:-0.35px;font-family:'Liberation Sans', sans-serif;">Process 0 Exited.</div></body></html>
